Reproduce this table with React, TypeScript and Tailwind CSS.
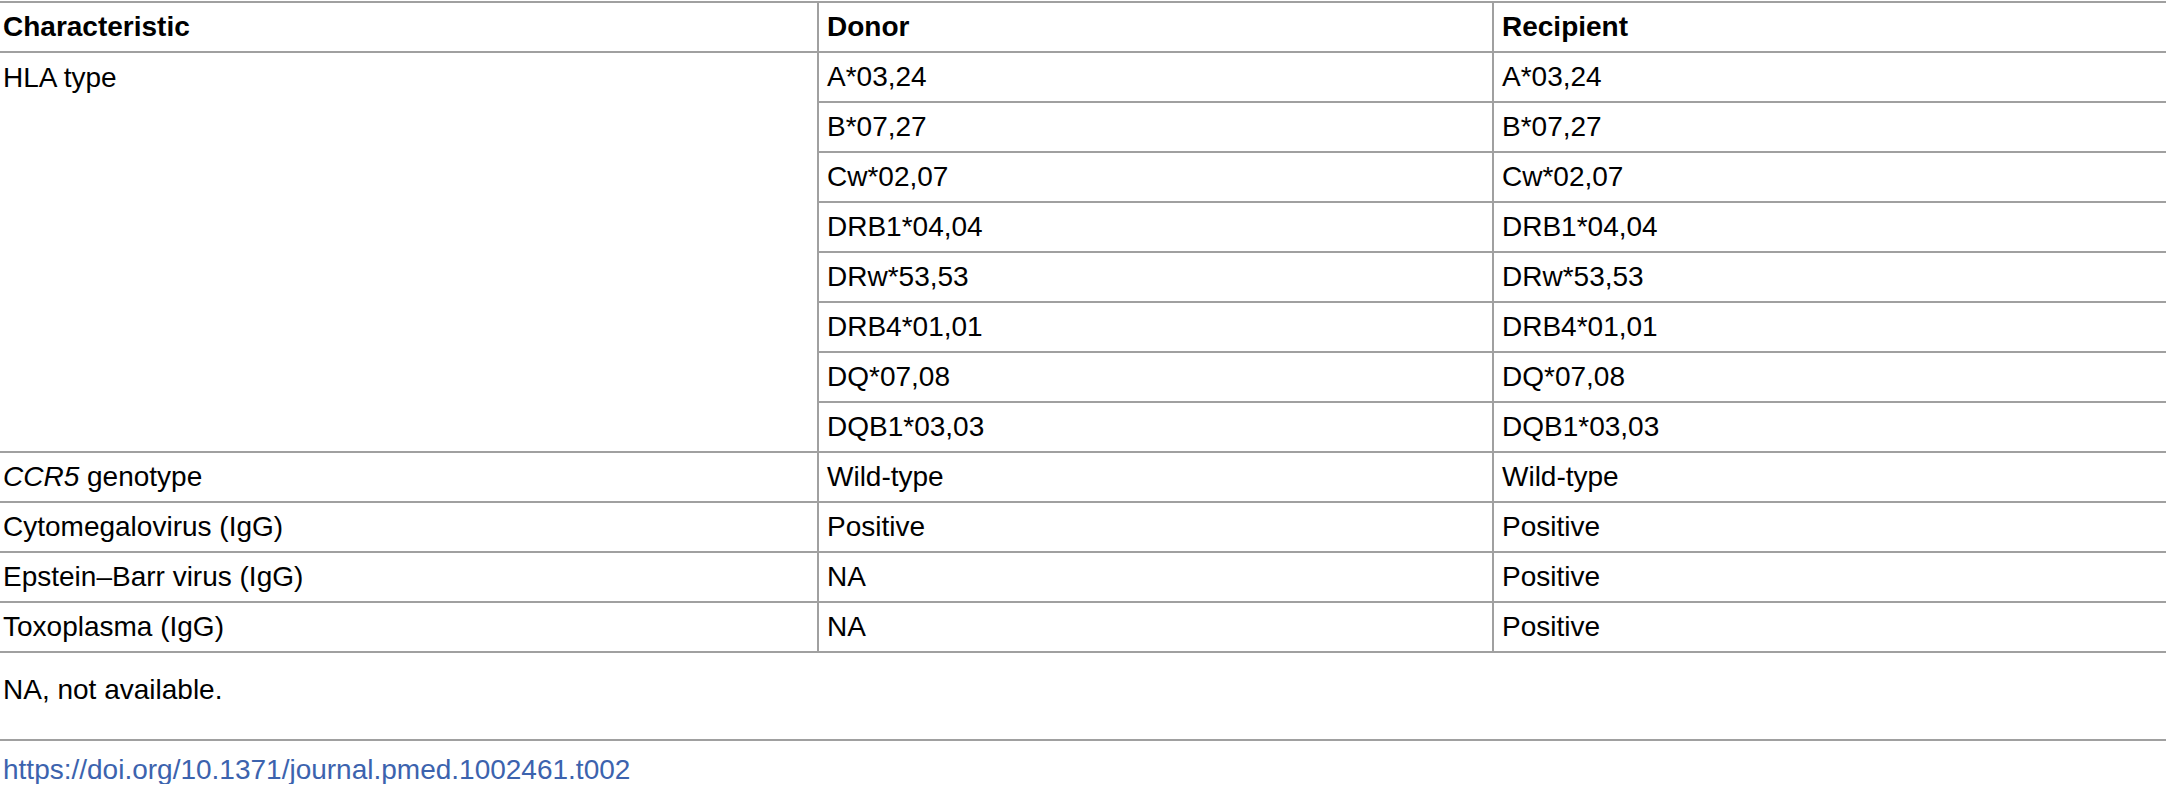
import React from 'react';

const hla: [string, string][] = [
  ['A*03,24', 'A*03,24'],
  ['B*07,27', 'B*07,27'],
  ['Cw*02,07', 'Cw*02,07'],
  ['DRB1*04,04', 'DRB1*04,04'],
  ['DRw*53,53', 'DRw*53,53'],
  ['DRB4*01,01', 'DRB4*01,01'],
  ['DQ*07,08', 'DQ*07,08'],
  ['DQB1*03,03', 'DQB1*03,03'],
];

const rest: [React.ReactNode, string, string][] = [
  [<><i>CCR5</i> genotype</>, 'Wild-type', 'Wild-type'],
  ['Cytomegalovirus (IgG)', 'Positive', 'Positive'],
  ['Epstein–Barr virus (IgG)', 'NA', 'Positive'],
  ['Toxoplasma (IgG)', 'NA', 'Positive'],
];

const cell = 'h-[50px] border-2 border-[#a0a0a0] align-middle p-0 pl-[8px]';
const first = 'h-[50px] border-y-2 border-r-2 border-[#a0a0a0] align-middle p-0 pl-[3px]';

export default function App() {
  return (
    <div className="w-[2166px] pt-[1px] bg-white text-black text-[28px] leading-none font-['Liberation_Sans',Arial,sans-serif]">
      <table className="w-full border-collapse table-fixed">
        <colgroup>
          <col className="w-[818px]" />
          <col className="w-[675px]" />
          <col />
        </colgroup>
        <thead>
          <tr>
            <th className={`${first} text-left font-bold`}>Characteristic</th>
            <th className={`${cell} text-left font-bold border-r-0`}>Donor</th>
            <th className={`${cell} text-left font-bold border-r-0`}>Recipient</th>
          </tr>
        </thead>
        <tbody>
          {hla.map(([d, r], i) => (
            <tr key={d}>
              {i === 0 && (
                <td rowSpan={hla.length} className={`${first} align-top pt-[11px]`}>
                  HLA type
                </td>
              )}
              <td className={cell}>{d}</td>
              <td className={`${cell} border-r-0`}>{r}</td>
            </tr>
          ))}
          {rest.map(([c, d, r], i) => (
            <tr key={i}>
              <td className={first}>{c}</td>
              <td className={cell}>{d}</td>
              <td className={`${cell} border-r-0`}>{r}</td>
            </tr>
          ))}
        </tbody>
      </table>
      <div className="h-[88px] pt-[23px] pl-[3px] border-b-2 border-[#a0a0a0]">NA, not available.</div>
      <div className="pt-[15px] pl-[3px]">
        <a className="text-[#3c63ae] no-underline">https://doi.org/10.1371/journal.pmed.1002461.t002</a>
      </div>
    </div>
  );
}
